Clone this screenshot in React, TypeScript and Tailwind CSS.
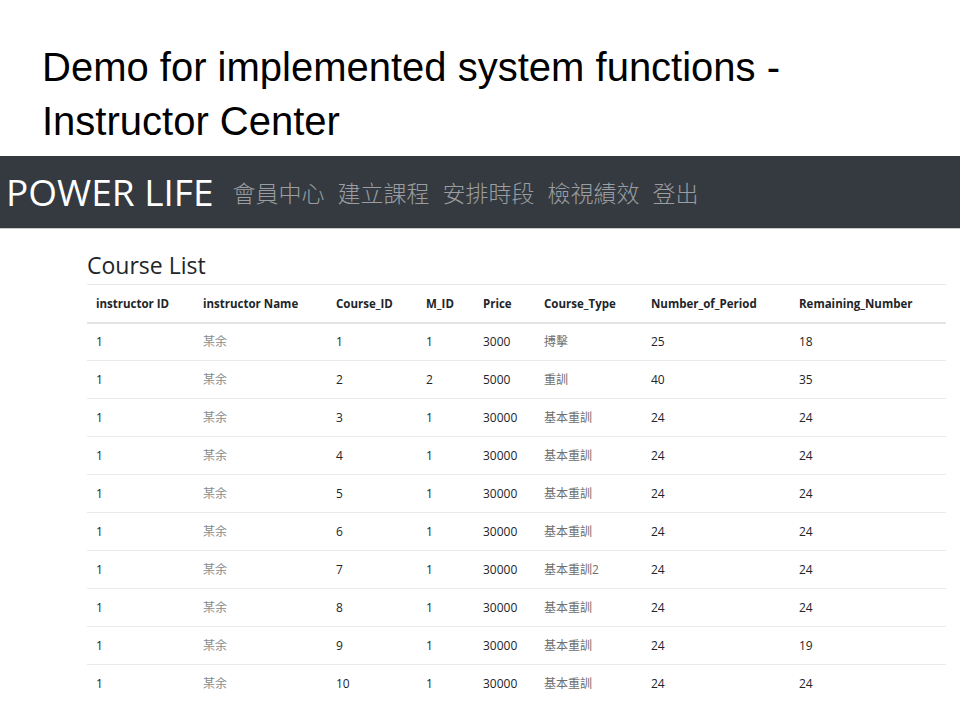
const rows = [
  { id: 1, cid: 1, mid: 1, price: 3000, type: "搏擊", period: 25, remain: 18 },
  { id: 1, cid: 2, mid: 2, price: 5000, type: "重訓", period: 40, remain: 35 },
  { id: 1, cid: 3, mid: 1, price: 30000, type: "基本重訓", period: 24, remain: 24 },
  { id: 1, cid: 4, mid: 1, price: 30000, type: "基本重訓", period: 24, remain: 24 },
  { id: 1, cid: 5, mid: 1, price: 30000, type: "基本重訓", period: 24, remain: 24 },
  { id: 1, cid: 6, mid: 1, price: 30000, type: "基本重訓", period: 24, remain: 24 },
  { id: 1, cid: 7, mid: 1, price: 30000, type: "基本重訓2", period: 24, remain: 24 },
  { id: 1, cid: 8, mid: 1, price: 30000, type: "基本重訓", period: 24, remain: 24 },
  { id: 1, cid: 9, mid: 1, price: 30000, type: "基本重訓", period: 24, remain: 19 },
  { id: 1, cid: 10, mid: 1, price: 30000, type: "基本重訓", period: 24, remain: 24 },
];

const navItems = ["會員中心", "建立課程", "安排時段", "檢視績效", "登出"];

const cjk = "font-['Open_Sans','Noto_Sans_CJK_TC',sans-serif]";

export default function App() {
  return (
    <div className="w-[960px] h-[720px] overflow-hidden bg-white">
      {/* slide title */}
      <div className="pl-[42px] pt-[40px] h-[156px] font-['Liberation_Sans',Arial,sans-serif] text-[40px] leading-[54px] text-black">
        <p>Demo for implemented system functions -</p>
        <p>Instructor Center</p>
      </div>

      {/* navbar */}
      <nav className="h-[73px] bg-[#343a40] border-b border-[#c9c9c9] flex items-center pl-[6px]">
        <span className="font-['Open_Sans',sans-serif] text-[37px] text-white">POWER LIFE</span>
        <div className={`flex items-center gap-[13px] ml-[19px] mt-[2px] ${cjk}`}>
          {navItems.map((n) => (
            <span key={n} className="text-[23px] text-[#9a9da1] font-light">
              {n}
            </span>
          ))}
        </div>
      </nav>

      {/* course list */}
      <div className="pl-[87px] pt-[20px]">
        <h2 className="font-['Open_Sans',sans-serif] text-[23px] leading-[32px] text-[#212529]">Course List</h2>
        <table className={`mt-[3px] w-[859px] table-fixed border-collapse text-[12px] text-[#212529] ${cjk}`}>
          <colgroup>
            <col className="w-[107px]" />
            <col className="w-[133px]" />
            <col className="w-[90px]" />
            <col className="w-[57px]" />
            <col className="w-[61px]" />
            <col className="w-[107px]" />
            <col className="w-[148px]" />
            <col className="w-[156px]" />
          </colgroup>
          <thead>
            <tr className="h-[38px] border-t border-[#e6e8ea] border-b-2 border-b-[#e2e4e6] text-left text-[11.5px] font-bold">
              <th className="pl-[9px]">instructor ID</th>
              <th className="pl-[9px]">instructor Name</th>
              <th className="pl-[9px]">Course_ID</th>
              <th className="pl-[9px]">M_ID</th>
              <th className="pl-[9px]">Price</th>
              <th className="pl-[9px]">Course_Type</th>
              <th className="pl-[9px]">Number_of_Period</th>
              <th className="pl-[9px]">Remaining_Number</th>
            </tr>
          </thead>
          <tbody>
            {rows.map((r) => (
              <tr key={r.cid} className="h-[38px] border-b border-[#e9ecef] last:border-b-0">
                <td className="pl-[9px]">{r.id}</td>
                <td className="pl-[9px] text-[#8a8a8a]">某余</td>
                <td className="pl-[9px]">{r.cid}</td>
                <td className="pl-[9px]">{r.mid}</td>
                <td className="pl-[9px]">{r.price}</td>
                <td className="pl-[9px] text-[#6f6f6f]">{r.type}</td>
                <td className="pl-[9px]">{r.period}</td>
                <td className="pl-[9px]">{r.remain}</td>
              </tr>
            ))}
          </tbody>
        </table>
      </div>
    </div>
  );
}
